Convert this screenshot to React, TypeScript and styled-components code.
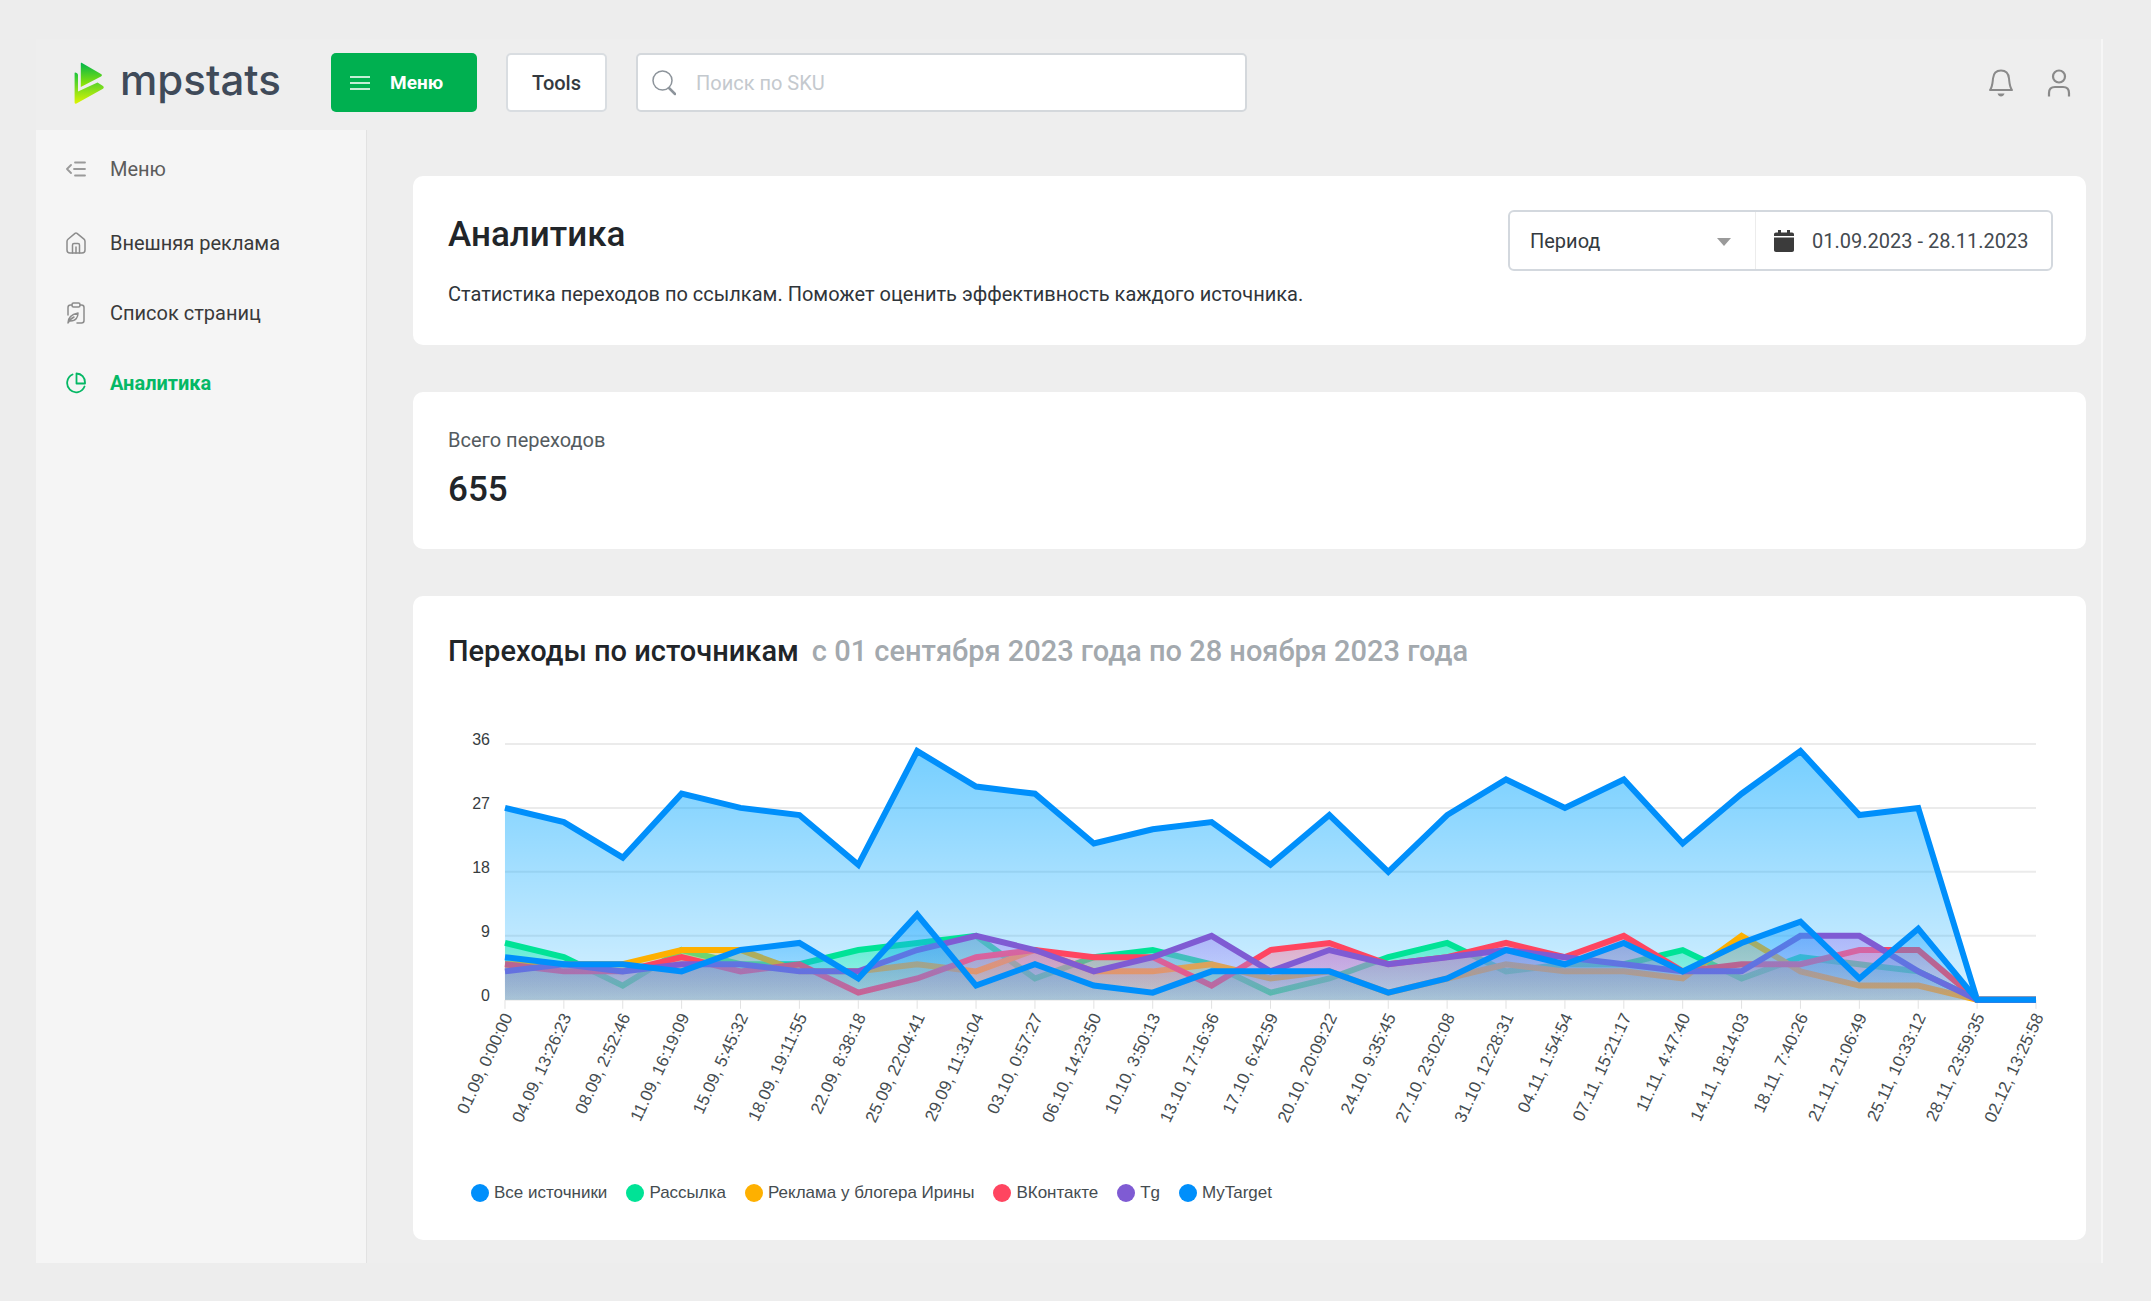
import React from "react";
import styled, { createGlobalStyle } from "styled-components";

const GlobalStyle = createGlobalStyle`
  *, *::before, *::after { box-sizing: border-box; }
  body {
    margin: 0;
    background: #ededed;
    color: #212529;
    font-family: Roboto, "Liberation Sans", sans-serif;
    font-size: 20px;
    line-height: 24px;
  }
  h1, h2, p, ul { margin: 0; padding: 0; }
  ul { list-style: none; }
  button, input, select { font: inherit; color: inherit; }
`;

const Page = styled.div`
  min-height: 100vh;
  display: flex;
  padding: 39px 48px 38px 36px;
`;

const AppWindow = styled.div`
  flex: 1;
  min-width: 0;
  display: flex;
  flex-direction: column;
  background: #eeeeee;
  border-right: 2px solid #f6f6f6;
`;

const Header = styled.header`
  display: flex;
  align-items: center;
  height: 91px;
  padding: 0 28px 4px 38px;
`;

const Logo = styled.a`
  display: flex;
  align-items: center;
  gap: 16px;
  width: 257px;
  color: #3f4a59;
  font-family: Inter, "Open Sans", sans-serif;
  font-size: 42px;
  line-height: 44px;
  font-weight: 500;
  text-decoration: none;
`;

const LogoText = styled.span`
  padding-bottom: 6px;
`;

const MenuButton = styled.button`
  display: flex;
  align-items: center;
  gap: 20px;
  height: 59px;
  padding: 0 34px 0 19px;
  border: 0;
  border-radius: 5px;
  background: #00b050;
  color: #fff;
  font-size: 19px;
  font-weight: 700;
  cursor: pointer;
`;

const ToolsButton = styled.button`
  height: 59px;
  margin: 0 29px;
  padding: 0 24px;
  border: 2px solid #d9dde1;
  border-radius: 5px;
  background: #fff;
  color: #343a40;
  font-weight: 500;
  cursor: pointer;
`;

const Search = styled.label`
  display: flex;
  align-items: center;
  gap: 18px;
  flex: 0 1 611px;
  height: 59px;
  padding: 0 16px 0 14px;
  border: 2px solid #d4d8dc;
  border-radius: 5px;
  background: #fff;
`;

const SearchInput = styled.input`
  flex: 1;
  min-width: 0;
  border: 0;
  outline: 0;
  background: transparent;
  &::placeholder { color: #c4c9ce; opacity: 1; }
`;

const HeaderIcons = styled.div`
  display: flex;
  gap: 30px;
  margin-left: auto;
`;

const IconButton = styled.button`
  display: flex;
  padding: 0;
  border: 0;
  background: none;
  color: #8a8a8a;
  cursor: pointer;
`;

const Body = styled.div`
  flex: 1;
  display: flex;
`;

const Sidebar = styled.nav`
  flex: 0 0 331px;
  background: #f5f5f5;
  border-right: 1px solid #e2e2e2;
`;

const Collapse = styled.button`
  display: flex;
  align-items: center;
  gap: 24px;
  width: 100%;
  height: 78px;
  padding: 0 30px;
  border: 0;
  background: none;
  color: #5c5c5c;
  cursor: pointer;
  svg { color: #9a9a9a; }
`;

const NavLink = styled.a<{ $active?: boolean }>`
  display: flex;
  align-items: center;
  gap: 24px;
  height: 70px;
  padding: 0 30px;
  color: ${(p) => (p.$active ? "#05b865" : "#3a3a3a")};
  font-weight: ${(p) => (p.$active ? 700 : 400)};
  text-decoration: none;
  svg { color: ${(p) => (p.$active ? "#05b865" : "#8c8c8c")}; }
`;

const Main = styled.main`
  flex: 1;
  min-width: 0;
  display: flex;
  flex-direction: column;
  gap: 47px;
  padding: 46px 15px 22px 46px;
`;

const Card = styled.section`
  padding: 34px 35px 35px;
  border-radius: 10px;
  background: #fff;
`;

const HeadCard = styled(Card)`
  display: flex;
  justify-content: space-between;
  align-items: flex-start;
  padding: 34px 33px 39px 35px;
`;

const Title = styled.h1`
  margin-bottom: 22px;
  font-size: 35px;
  line-height: 50px;
  font-weight: 500;
`;

const Text = styled.p`
  color: #2f353a;
`;

const Period = styled.div`
  display: flex;
  height: 61px;
  border: 2px solid #d3d8de;
  border-radius: 6px;
`;

const SelectBox = styled.div`
  display: grid;
  align-items: center;
  width: 246px;
  border-right: 1px solid #ececec;
  > * { grid-area: 1 / 1; }
  svg { justify-self: end; margin-right: 24px; pointer-events: none; }
`;

const Select = styled.select`
  width: 100%;
  height: 100%;
  padding: 0 48px 0 20px;
  appearance: none;
  border: 0;
  outline: 0;
  background: transparent;
  color: #343a40;
`;

const DateBox = styled.label`
  display: flex;
  align-items: center;
  gap: 18px;
  padding: 0 15px 0 18px;
`;

const DateInput = styled.input`
  width: 224px;
  padding: 0;
  border: 0;
  outline: 0;
  background: transparent;
  color: #444a50;
`;

const StatLabel = styled.p`
  color: #545b5f;
  line-height: 28px;
  margin-bottom: 12px;
`;

const StatValue = styled.p`
  font-size: 35px;
  line-height: 48px;
  font-weight: 500;
`;

const ChartTitle = styled.h2`
  display: flex;
  flex-wrap: wrap;
  gap: 0 13px;
  font-size: 29px;
  line-height: 43px;
  font-weight: 500;
  span { color: #a3a9ae; }
`;

const ChartSvg = styled.svg`
  display: block;
  width: 100%;
  height: auto;
  overflow: visible;
  font-family: "Liberation Sans", Arial, sans-serif;
`;

const YLabel = styled.text`
  fill: #373d3f;
  font-size: 16px;
  text-anchor: end;
`;

const XLabel = styled.text`
  fill: #454c50;
  font-size: 17px;
  text-anchor: end;
`;

const Legend = styled.ul`
  display: flex;
  flex-wrap: wrap;
  gap: 8px 19px;
  padding: 38px 23px 0;
  font-family: "Liberation Sans", Arial, sans-serif;
  font-size: 17px;
  color: #454c50;
`;

const LegendItem = styled.li<{ $color: string }>`
  display: flex;
  align-items: center;
  gap: 5px;
  &::before {
    content: "";
    width: 18px;
    height: 18px;
    border-radius: 50%;
    background: ${(p) => p.$color};
  }
`;

const labels = [
  "01.09, 0:00:00", "04.09, 13:26:23", "08.09, 2:52:46", "11.09, 16:19:09", "15.09, 5:45:32",
  "18.09, 19:11:55", "22.09, 8:38:18", "25.09, 22:04:41", "29.09, 11:31:04", "03.10, 0:57:27",
  "06.10, 14:23:50", "10.10, 3:50:13", "13.10, 17:16:36", "17.10, 6:42:59", "20.10, 20:09:22",
  "24.10, 9:35:45", "27.10, 23:02:08", "31.10, 12:28:31", "04.11, 1:54:54", "07.11, 15:21:17",
  "11.11, 4:47:40", "14.11, 18:14:03", "18.11, 7:40:26", "21.11, 21:06:49", "25.11, 10:33:12",
  "28.11, 23:59:35", "02.12, 13:25:58",
];

type Series = { name: string; color: string; fill: string; data: number[] };

const series: Series[] = [
  { name: "Все источники", color: "#008ffb", fill: "#00a5ff", data: [27, 25, 20, 29, 27, 26, 19, 35, 30, 29, 22, 24, 25, 19, 26, 18, 26, 31, 27, 31, 22, 29, 35, 26, 27, 0, 0] },
  { name: "Рассылка", color: "#00e396", fill: "#00f0a8", data: [8, 6, 2, 7, 5, 5, 7, 8, 9, 3, 6, 7, 5, 1, 3, 6, 8, 4, 5, 5, 7, 3, 6, 5, 4, 0, 0] },
  { name: "Реклама у блогера Ирины", color: "#feb000", fill: "#ffc040", data: [5, 5, 5, 7, 7, 4, 4, 5, 4, 7, 4, 4, 5, 3, 4, 1, 3, 5, 4, 4, 3, 9, 4, 2, 2, 0, 0] },
  { name: "ВКонтакте", color: "#ff4560", fill: "#ff6f94", data: [5, 4, 4, 6, 4, 5, 1, 3, 6, 7, 6, 6, 2, 7, 8, 5, 6, 8, 6, 9, 4, 5, 5, 7, 7, 0, 0] },
  { name: "Tg", color: "#7f5bd3", fill: "#a08cf4", data: [4, 5, 4, 5, 5, 4, 4, 7, 9, 7, 4, 6, 9, 4, 7, 5, 6, 7, 6, 5, 4, 4, 9, 9, 4, 0, 0] },
  { name: "MyTarget", color: "#008ffb", fill: "#20a8ff", data: [6, 5, 5, 4, 7, 8, 3, 12, 2, 5, 2, 1, 4, 4, 4, 1, 3, 7, 5, 8, 4, 8, 11, 3, 10, 0, 0] },
];

const LEFT = 57;
const RIGHT = 1589;
const TOP = 71;
const BOTTOM = 327;
const x = (i: number) => LEFT + ((RIGHT - LEFT) * i) / (labels.length - 1);
const y = (v: number) => BOTTOM - ((BOTTOM - TOP) * v) / 36;

function Chart() {
  return (
    <ChartSvg viewBox="0 0 1604 470" role="img" aria-label="Переходы по источникам">
      <defs>
        {series.map((s, n) => (
          <linearGradient key={n} id={`area${n}`} x1="0" y1="0" x2="0" y2="1">
            <stop offset="0" stopColor={s.fill} stopOpacity="0.54" />
            <stop offset="1" stopColor={s.fill} stopOpacity="0.16" />
          </linearGradient>
        ))}
      </defs>
      {[36, 27, 18, 9, 0].map((v) => (
        <g key={v}>
          <line x1={LEFT} x2={RIGHT} y1={y(v)} y2={y(v)} stroke="#ebebeb" strokeWidth="2" />
          <YLabel x="42" y={y(v) + 1}>{v}</YLabel>
        </g>
      ))}
      {labels.map((l, i) => (
        <g key={l}>
          <line x1={x(i)} x2={x(i)} y1={BOTTOM} y2={BOTTOM + 9} stroke="#e2e2e2" strokeWidth="1" />
          <XLabel transform={`translate(${x(i) + 8} ${BOTTOM + 17}) rotate(-65)`}>{l}</XLabel>
        </g>
      ))}
      {series.map((s, n) => {
        const line = s.data.map((v, i) => `${i ? "L" : "M"}${x(i)} ${y(v)}`).join("");
        return (
          <g key={n}>
            <path d={`${line}L${RIGHT} ${BOTTOM}L${LEFT} ${BOTTOM}Z`} fill={`url(#area${n})`} />
            <path d={line} fill="none" stroke={s.color} strokeWidth="6" />
          </g>
        );
      })}
    </ChartSvg>
  );
}

const line = { fill: "none", stroke: "currentColor", strokeLinecap: "round", strokeLinejoin: "round" } as const;

const LogoMark = () => (
  <svg width="30" height="42" viewBox="0 0 30 42" aria-hidden="true">
    <defs>
      <linearGradient id="mark" x1="0" y1="0" x2="0" y2="1">
        <stop offset="0" stopColor="#00b64a" />
        <stop offset="1" stopColor="#9be800" />
      </linearGradient>
      <linearGradient id="markBack" x1="0" y1="0" x2="0" y2="1">
        <stop offset="0" stopColor="#1cc43c" />
        <stop offset="1" stopColor="#dcf500" />
      </linearGradient>
    </defs>
    <path d="M8 1C7 .4 6.800 1 6.800 2V25L27 14.500C28.500 13.500 28 12.500 27 12Z" fill="url(#mark)" />
    <path d="M1 10.500C2.500 10.500 4 11.500 4 13V29.500L23.500 20.500L29 24C30 25 30 26 29 26.700L2.500 41.500C1 42 .6 41.500 .6 40V11Z" fill="url(#markBack)" />
  </svg>
);

const BurgerIcon = () => (
  <svg width="20" height="16" viewBox="0 0 20 16" fill="#c4eed6" aria-hidden="true">
    <path d="M0 1h20v2H0zM0 7h20v2H0zM0 13h20v2H0z" />
  </svg>
);

const SearchIcon = () => (
  <svg width="24" height="26" viewBox="0 0 24 26" {...line} stroke="#8d949b" strokeWidth="1.500" aria-hidden="true">
    <circle cx="10.500" cy="10.500" r="9.500" />
    <path d="M17 18l6 6" strokeWidth="2.500" />
  </svg>
);

const BellIcon = () => (
  <svg width="28" height="30" viewBox="0 0 28 30" {...line} strokeWidth="2" aria-hidden="true">
    <path d="M3 22C5.500 18.500 5.500 15 6 10.500C6.500 5 9.500 2.500 14 2.500S21.500 5 22 10.500C22.500 15 22.500 18.500 25 22Z" />
    <path d="M10.500 25.500h7c-1 4-6 4-7 0z" fill="currentColor" stroke="none" />
  </svg>
);

const UserIcon = () => (
  <svg width="28" height="30" viewBox="0 0 28 30" {...line} strokeWidth="2.200" strokeLinecap="butt" aria-hidden="true">
    <circle cx="14" cy="8.500" r="6" />
    <path d="M4 28.500V25C4 21 6.500 19 10 19H18C21.500 19 24 21 24 25V28.500" />
  </svg>
);

const CollapseIcon = () => (
  <svg width="20" height="16" viewBox="0 0 20 16" {...line} strokeWidth="1.800" aria-hidden="true">
    <path d="M5 4L1 8l4 4M9 1.500h10M8 8h11M9 14.500h10" />
  </svg>
);

const HomeIcon = () => (
  <svg width="20" height="22" viewBox="0 0 20 22" {...line} strokeWidth="1.500" aria-hidden="true">
    <path d="M1 9.500C1 8.500 1.300 7.800 2 7.200L9 1.400C9.600 .9 10.400 .9 11 1.400L18 7.200C18.700 7.800 19 8.500 19 9.500V18C19 20 18 21 16 21H4C2 21 1 20 1 18Z" />
    <path d="M6.500 21V13C6.500 12 7 11.500 8 11.500H12C13 11.500 13.500 12 13.500 13V21M10 15V21" />
  </svg>
);

const PagesIcon = () => (
  <svg width="20" height="22" viewBox="0 0 20 22" {...line} strokeWidth="1.500" aria-hidden="true">
    <path d="M6 3H4.500C3 3 2 4 2 5.500V13M14 3H15.500C17 3 18 4 18 5.500V18.500C18 20 17 21 15.500 21H11" />
    <rect x="6" y="1" width="8" height="4" rx="1.500" />
    <path d="M2 21C2 16 5 12.500 12 11C12 15 10 19 4.500 19M2 21C3 18.500 5 16.500 8 15" />
  </svg>
);

const PieIcon = () => (
  <svg width="20" height="22" viewBox="0 0 20 22" {...line} strokeWidth="1.800" aria-hidden="true">
    <path d="M6.500 2.500A9 9.300 0 1 0 18.500 14.500" />
    <path d="M10.500 1.500C15.500 1.700 19 5.500 19 10.500V11.500H10.500Z" />
  </svg>
);

const CaretIcon = () => (
  <svg width="14" height="10" viewBox="0 0 14 10" aria-hidden="true">
    <path d="M0 2h14L7 10z" fill="#9a9a9a" />
  </svg>
);

const CalendarIcon = () => (
  <svg width="20" height="22" viewBox="0 0 20 22" fill="#3b3b3b" aria-hidden="true">
    <path d="M4 0h3v2.500h6V0h3v2.500h2c1.200 0 2 .8 2 2V6H0V4.500c0-1.200.8-2 2-2h2z" />
    <path d="M0 7.500h20V20c0 1.200-.8 2-2 2H2c-1.200 0-2-.8-2-2z" />
  </svg>
);

export default function App() {
  return (
    <>
      <GlobalStyle />
      <Page>
        <AppWindow>
          <Header>
            <Logo href="#">
              <LogoMark />
              <LogoText>mpstats</LogoText>
            </Logo>
            <MenuButton type="button"><BurgerIcon />Меню</MenuButton>
            <ToolsButton type="button">Tools</ToolsButton>
            <Search>
              <SearchIcon />
              <SearchInput type="text" placeholder="Поиск по SKU" aria-label="Поиск по SKU" />
            </Search>
            <HeaderIcons>
              <IconButton type="button" aria-label="Уведомления"><BellIcon /></IconButton>
              <IconButton type="button" aria-label="Профиль"><UserIcon /></IconButton>
            </HeaderIcons>
          </Header>
          <Body>
            <Sidebar>
              <Collapse type="button"><CollapseIcon />Меню</Collapse>
              <NavLink href="#ads"><HomeIcon />Внешняя реклама</NavLink>
              <NavLink href="#pages"><PagesIcon />Список страниц</NavLink>
              <NavLink href="#analytics" $active><PieIcon />Аналитика</NavLink>
            </Sidebar>
            <Main>
              <HeadCard>
                <div>
                  <Title>Аналитика</Title>
                  <Text>Статистика переходов по ссылкам. Поможет оценить эффективность каждого источника.</Text>
                </div>
                <Period>
                  <SelectBox>
                    <Select aria-label="Период"><option>Период</option></Select>
                    <CaretIcon />
                  </SelectBox>
                  <DateBox>
                    <CalendarIcon />
                    <DateInput type="text" readOnly value="01.09.2023 - 28.11.2023" aria-label="Даты" />
                  </DateBox>
                </Period>
              </HeadCard>
              <Card>
                <StatLabel>Всего переходов</StatLabel>
                <StatValue>655</StatValue>
              </Card>
              <Card>
                <ChartTitle>Переходы по источникам <span>с 01 сентября 2023 года по 28 ноября 2023 года</span></ChartTitle>
                <Chart />
                <Legend>
                  {series.map((s) => (
                    <LegendItem key={s.name} $color={s.color}>{s.name}</LegendItem>
                  ))}
                </Legend>
              </Card>
            </Main>
          </Body>
        </AppWindow>
      </Page>
    </>
  );
}
